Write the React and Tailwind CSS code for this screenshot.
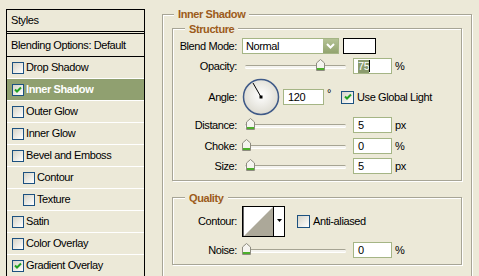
import React from 'react';

const Check = () => (
    <svg width="8" height="8" viewBox="0 0 8 8">
        <path d="M1 3.5 L3 5.5 L7 1.5" fill="none" stroke="#21a121" strokeWidth="2" />
    </svg>
);

const Box = ({ checked, size = 'w-[12px] h-[12px]' }) => (
    <div className={`${size} shrink-0 border border-[#1c5180] bg-gradient-to-br from-[#d6d4c8] to-white flex items-center justify-center`}>
        {checked && <Check />}
    </div>
);

const Thumb = () => (
    <svg width="9" height="12" viewBox="0 0 9 12">
        <path d="M0.5 4 L4.5 0.5 L8.5 4 V11.5 H0.5 Z" fill="#f5f4ef" stroke="#8e8c80" />
        <rect x="1" y="9" width="7" height="2" fill="#4caf2a" />
    </svg>
);

const Slider = ({ left }) => (
    <div className="relative w-[107px] h-[16px] shrink-0 flex items-center">
        <div className="ml-[3px] w-[101px] h-[3px] rounded-full bg-[#f4f3ee] border-t border-[#a6a493] shadow-[0_1px_0_#fff]"></div>
        <div className="absolute top-[1px]" style={{ left }}>
            <Thumb />
        </div>
    </div>
);

const Field = ({ children, w = 'w-[39px]' }) => (
    <div className={`${w} h-[16px] shrink-0 border border-[#a5b585] bg-white pl-[4px] flex items-center`}>
        {children}
    </div>
);

const Label = ({ children }) => (
    <div className="w-[64px] shrink-0 text-right">{children}</div>
);

const SliderRow = ({ label, left, value, unit, mt }) => (
    <div className={`flex items-center h-[16px] ${mt}`}>
        <Label>{label}</Label>
        <div className="ml-[5px]">
            <Slider left={left} />
        </div>
        <div className="ml-[4px]">
            <Field>{value}</Field>
        </div>
        <span className="ml-[3px]">{unit}</span>
    </div>
);

const styles = [
    { name: 'Drop Shadow' },
    { name: 'Inner Shadow', checked: true, active: true },
    { name: 'Outer Glow' },
    { name: 'Inner Glow' },
    { name: 'Bevel and Emboss' },
    { name: 'Contour', sub: true },
    { name: 'Texture', sub: true },
    { name: 'Satin' },
    { name: 'Color Overlay' },
    { name: 'Gradient Overlay', checked: true },
];

const groupBox = 'border border-[#a7a596] shadow-[inset_1px_1px_0_#fff,1px_1px_0_#fff] flex flex-col';
const legend = 'h-[14px] leading-[14px] px-[4px] w-fit bg-[#ece9d8] font-bold text-[#9c5b1b]';

export default function App() {
    return (
        <div className="w-[479px] h-[276px] overflow-hidden bg-[#ece9d8] flex items-start text-[11px] leading-[13px] tracking-[-0.4px] text-black font-['Liberation_Sans',sans-serif]">
            {/* Styles list */}
            <div className="ml-[6px] mt-[9px] w-[139px] shrink-0 border border-black flex flex-col">
                <div className="h-[22px] border-b border-black pl-[4px] flex items-center">Styles</div>
                <div className="h-[1px]"></div>
                <div className="h-[24px] border-y border-black pl-[4px] flex items-center">Blending Options: Default</div>
                {styles.map((s) => (
                    <div
                        key={s.name}
                        className={`h-[22px] border-b border-white flex items-center ${s.sub ? 'pl-[16px]' : 'pl-[5px]'} ${s.active ? 'bg-[#90a070] text-white font-bold' : ''}`}
                    >
                        <Box checked={s.checked} />
                        <span className="ml-[2px]">{s.name}</span>
                    </div>
                ))}
            </div>

            {/* Inner Shadow panel */}
            <div className={`ml-[17px] mt-[14px] w-[310px] h-[300px] shrink-0 ${groupBox}`}>
                <div className={`-mt-[8px] ml-[11px] ${legend}`}>Inner Shadow</div>

                {/* Structure */}
                <div className={`ml-[9px] mt-[7px] w-[290px] pb-[6px] ${groupBox}`}>
                    <div className={`-mt-[7px] -mb-[7px] ml-[12px] ${legend}`}>Structure</div>

                    <div className="mt-[9px] h-[16px] flex items-center">
                        <Label>Blend Mode:</Label>
                        <div className="ml-[5px] w-[97px] h-[16px] border border-[#a5b585] bg-white flex items-center justify-between">
                            <span className="pl-[3px]">Normal</span>
                            <div className="w-[15px] h-[14px] bg-gradient-to-b from-[#b4c295] to-[#93a46f] flex items-center justify-center">
                                <svg width="9" height="6" viewBox="0 0 9 6">
                                    <path d="M1 1 L4.5 4.5 L8 1" fill="none" stroke="#fff" strokeWidth="2" />
                                </svg>
                            </div>
                        </div>
                        <div className="ml-[4px] w-[33px] h-[16px] border border-black bg-white"></div>
                    </div>

                    <div className="mt-[4px] h-[16px] flex items-center">
                        <Label>Opacity:</Label>
                        <div className="ml-[5px]">
                            <Slider left={74} />
                        </div>
                        <div className="ml-[4px]">
                            <Field>
                                <span className="bg-[#8b9b6d] text-white">75</span>
                                <span className="w-[1px] h-[12px] bg-black"></span>
                            </Field>
                        </div>
                        <span className="ml-[3px]">%</span>
                    </div>

                    <div className="mt-[4px] h-[38px] flex items-center">
                        <Label>Angle:</Label>
                        <svg className="ml-[5px] shrink-0" width="38" height="38" viewBox="0 0 38 38">
                            <defs>
                                <radialGradient id="dial" cx="50%" cy="45%" r="55%">
                                    <stop offset="0%" stopColor="#ffffff" />
                                    <stop offset="100%" stopColor="#dddbd1" />
                                </radialGradient>
                            </defs>
                            <circle cx="19" cy="19" r="17.5" fill="url(#dial)" stroke="#3f5a88" strokeWidth="1.5" />
                            <line x1="19" y1="19" x2="11" y2="5" stroke="#000" strokeWidth="1" />
                            <rect x="17.5" y="17.5" width="3" height="3" fill="#000" />
                        </svg>
                        <div className="ml-[3px]">
                            <Field w="w-[41px]">120</Field>
                        </div>
                        <span className="ml-[3px] w-[14px] mb-[8px]">°</span>
                        <Box checked size="w-[13px] h-[13px]" />
                        <span className="ml-[3px]">Use Global Light</span>
                    </div>

                    <SliderRow label="Distance:" left={4} value="5" unit="px" mt="mt-[1px]" />
                    <SliderRow label="Choke:" left={0} value="0" unit="%" mt="mt-[5px]" />
                    <SliderRow label="Size:" left={4} value="5" unit="px" mt="mt-[4px]" />
                </div>

                {/* Quality */}
                <div className={`ml-[9px] mt-[16px] w-[290px] pb-[6px] ${groupBox}`}>
                    <div className={`-mt-[7px] -mb-[7px] ml-[12px] ${legend}`}>Quality</div>

                    <div className="mt-[8px] h-[31px] flex items-center">
                        <Label>Contour:</Label>
                        <svg className="ml-[5px] shrink-0" width="43" height="31" viewBox="0 0 43 31">
                            <rect x="0" y="0" width="43" height="31" fill="#fff" />
                            <path d="M2 30 L31 1 V30 Z" fill="#aca899" />
                            <rect x="0.5" y="0.5" width="42" height="30" fill="none" stroke="#000" />
                            <line x1="0.8" y1="0" x2="0.8" y2="31" stroke="#000" strokeWidth="1.6" />
                            <line x1="31.5" y1="0" x2="31.5" y2="31" stroke="#000" />
                            <path d="M35 13 H40 L37.5 16 Z" fill="#000" />
                        </svg>
                        <div className="ml-[12px]">
                            <Box size="w-[13px] h-[13px]" />
                        </div>
                        <span className="ml-[3px]">Anti-aliased</span>
                    </div>

                    <SliderRow label="Noise:" left={0} value="0" unit="%" mt="mt-[5px]" />
                </div>
            </div>
        </div>
    );
}
